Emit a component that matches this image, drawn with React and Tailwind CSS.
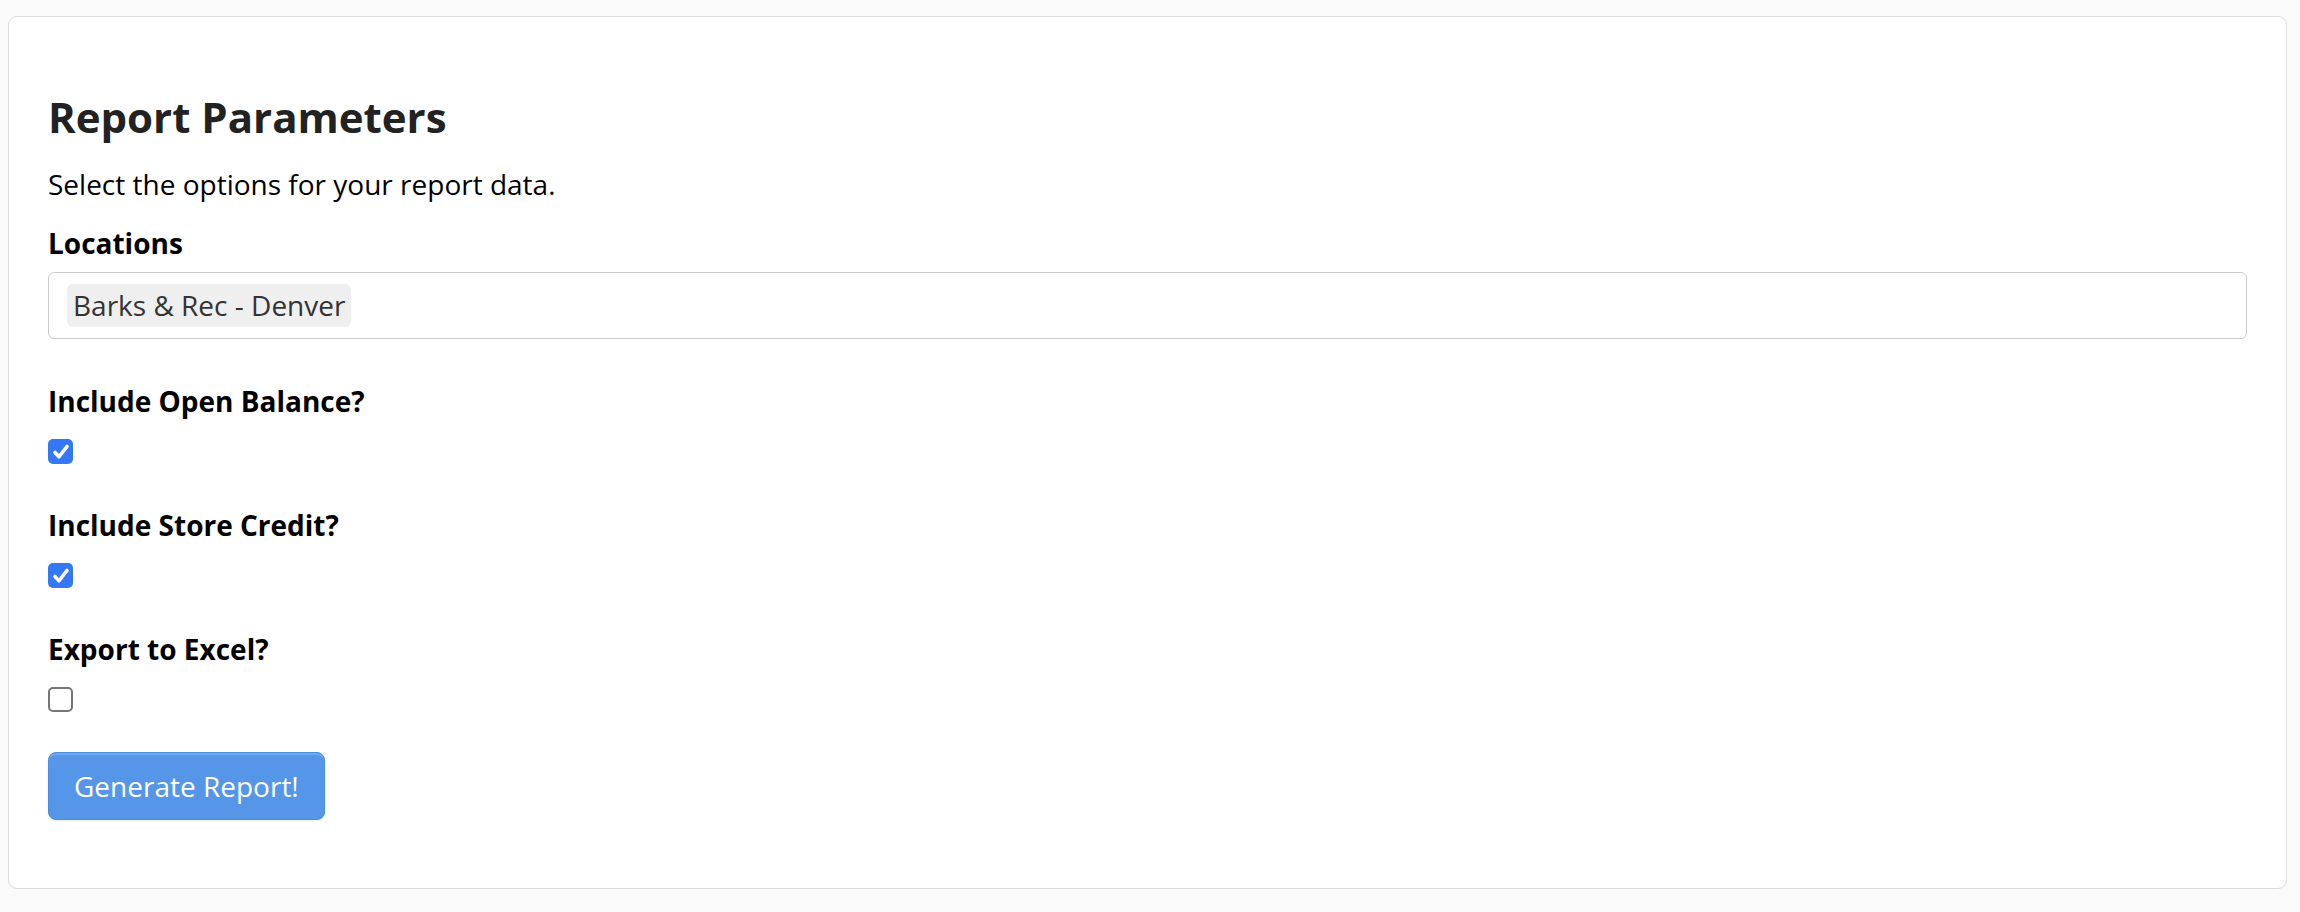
import React from "react";

const Check = ({ checked }) => {
  if (!checked) {
    return (
      <div className="w-[25px] h-[25px] rounded-[5px] border-2 border-[#767676] bg-white" />
    );
  }
  return (
    <div className="w-[25px] h-[25px] rounded-[5px] bg-[#3478f6] flex items-center justify-center">
      <svg width="20" height="20" viewBox="0 0 16 16" fill="none">
        <path
          d="M3.2 8.4 L6.4 11.8 L12.8 3.6"
          stroke="white"
          strokeWidth="2.9"
          strokeLinecap="round"
          strokeLinejoin="round"
        />
      </svg>
    </div>
  );
};

const Field = ({ label, checked, first }) => {
  return (
    <div className={first ? "mt-[44px]" : "mt-[43px]"}>
      <p className="text-[28px] leading-[36px] font-bold text-black">{label}</p>
      <div className="mt-[20px]">
        <Check checked={checked} />
      </div>
    </div>
  );
};

const App = () => {
  return (
    <div
      className="min-h-[912px] bg-[#fafafa] pt-4 pl-2 pr-[13px]"
      style={{ fontFamily: "'Open Sans', 'Noto Sans', sans-serif" }}
    >
      <div className="bg-white border border-[#dcdcdc] rounded-[9px] px-[39px] pt-[75px] pb-[68px]">
        <h2 className="text-[42px] leading-[50px] font-bold text-[#222]">
          Report Parameters
        </h2>
        <p className="mt-[24px] text-[28px] leading-[36px] text-black">
          Select the options for your report data.
        </p>
        <p className="mt-[23px] text-[28px] leading-[36px] font-bold text-black">
          Locations
        </p>
        <div className="mt-[11px] h-[67px] border-[1.5px] border-[#cbcbcb] rounded-[6px] flex items-center px-[18px]">
          <span className="bg-[#efefef] rounded-[6px] px-[6px] h-[43px] leading-[43px] text-[28px] text-[#333]">
            Barks &amp; Rec - Denver
          </span>
        </div>

        <Field label="Include Open Balance?" checked first />
        <Field label="Include Store Credit?" checked />
        <Field label="Export to Excel?" checked={false} />

        <button className="mt-[40px] h-[68px] px-[25px] bg-[#5596e8] border border-[#4a8ce0] rounded-[8px] text-white text-[28px] shadow-[inset_0_2px_0_rgba(255,255,255,0.18),0_1px_2px_rgba(0,0,0,0.08)]">
          Generate Report!
        </button>
      </div>
    </div>
  );
};

export default App;
